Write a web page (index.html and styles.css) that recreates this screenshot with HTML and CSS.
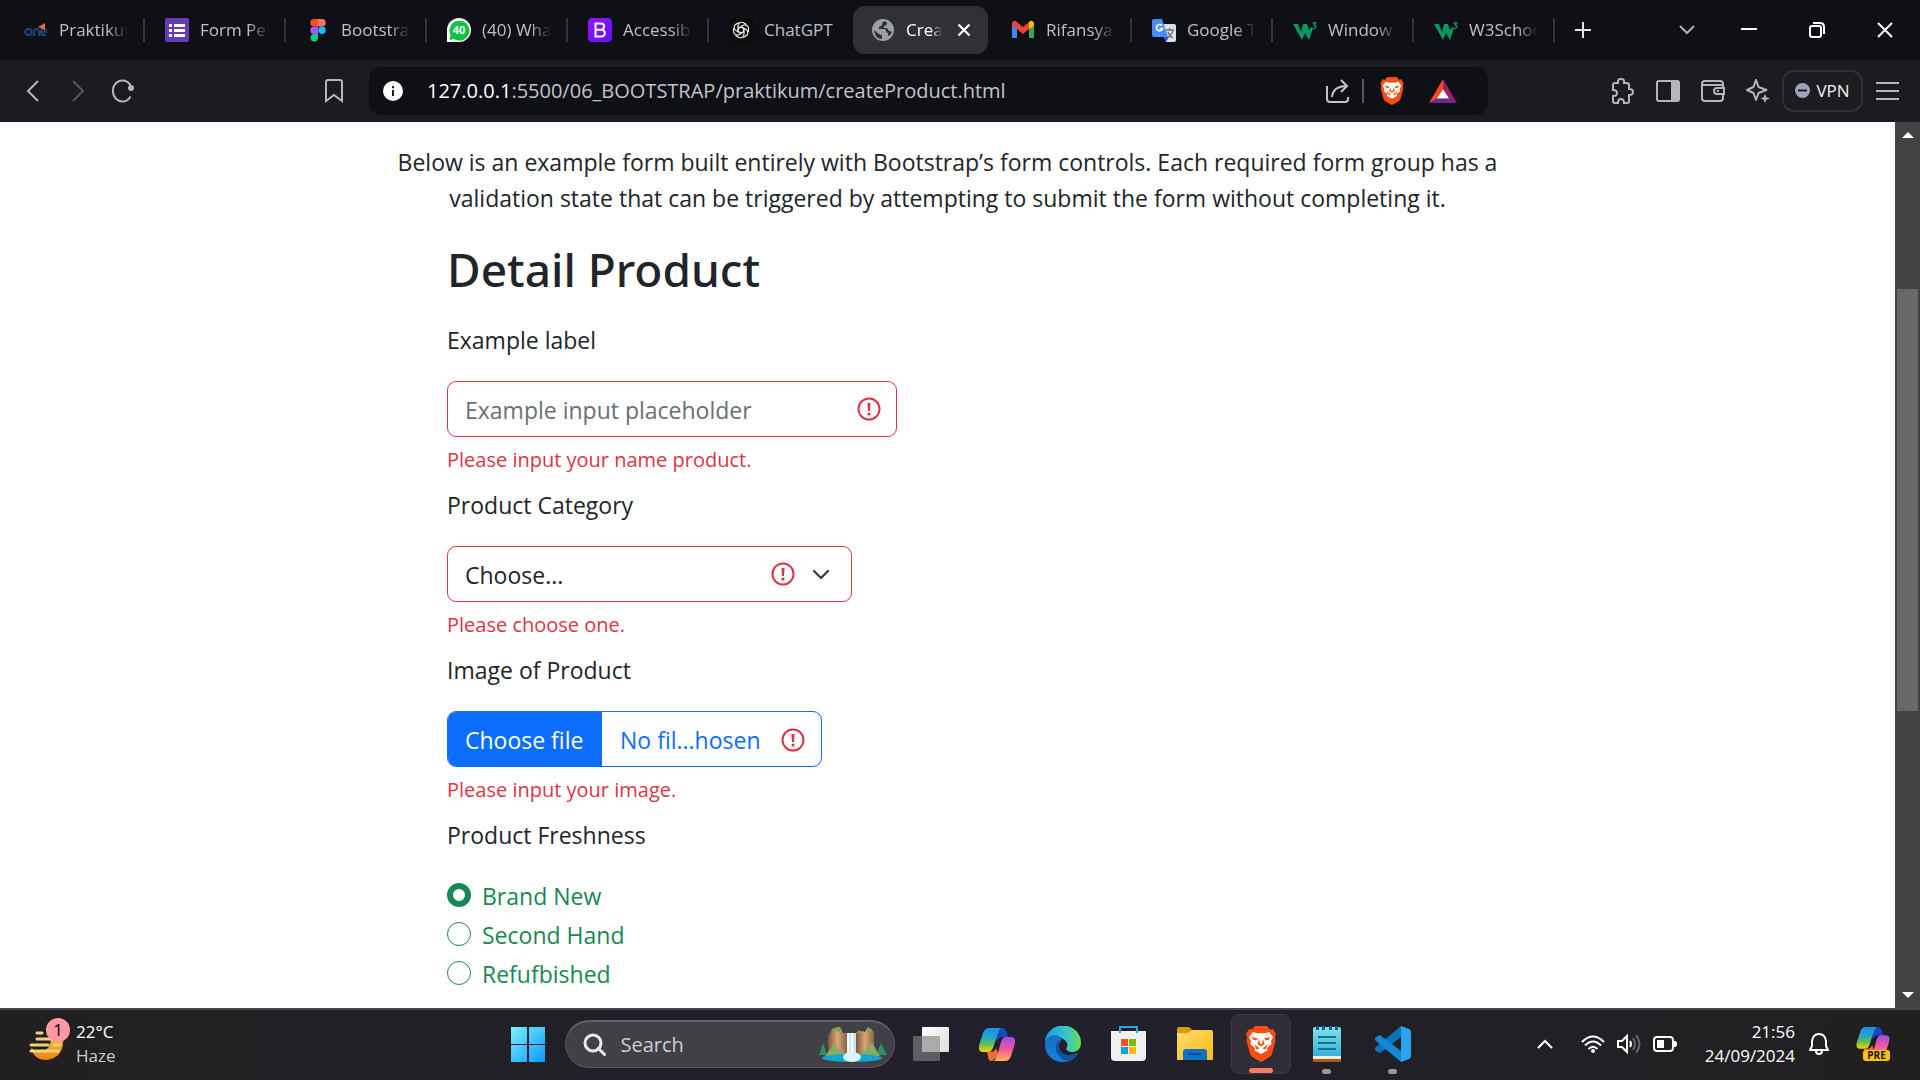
FILE: index.html
```html
<!DOCTYPE html>
<html lang="en">
<head>
<meta charset="utf-8">
<title>Create Product</title>
<link rel="stylesheet" href="styles.css">
</head>
<body>
<svg class="defs" aria-hidden="true">
  <defs>
    <linearGradient id="win" gradientUnits="userSpaceOnUse" x1="0" y1="0" x2="36" y2="36"><stop offset="0" stop-color="#7df3ff"/><stop offset="1" stop-color="#0a96ff"/></linearGradient>
    <linearGradient id="cpA" x1="0" y1="0" x2="0" y2="1"><stop offset="0" stop-color="#1f8fe8"/><stop offset=".4" stop-color="#23a7c9"/><stop offset=".7" stop-color="#6cc04a"/><stop offset="1" stop-color="#ffd400"/></linearGradient>
    <linearGradient id="cpB" x1="0" y1="0" x2="0" y2="1"><stop offset="0" stop-color="#a14bf0"/><stop offset=".5" stop-color="#f2559b"/><stop offset="1" stop-color="#ffb657"/></linearGradient>
    <linearGradient id="edA" x1="0" y1="0" x2="1" y2="0"><stop offset="0" stop-color="#1b9de2"/><stop offset=".6" stop-color="#35c6c9"/><stop offset="1" stop-color="#66e04b"/></linearGradient>
    <linearGradient id="edB" x1="0" y1="0" x2="0" y2="1"><stop offset="0" stop-color="#1a6fc0"/><stop offset="1" stop-color="#0f83dc"/></linearGradient>
    <linearGradient id="fold" x1="0" y1="0" x2="1" y2="1"><stop offset="0" stop-color="#ffdc70"/><stop offset="1" stop-color="#fcb912"/></linearGradient>
    <linearGradient id="note" x1="0" y1="0" x2="0" y2="1"><stop offset="0" stop-color="#7fe0ee"/><stop offset="1" stop-color="#37b3d3"/></linearGradient>
    <linearGradient id="moon" x1="0" y1="0" x2="0" y2="1"><stop offset="0" stop-color="#f7c331"/><stop offset="1" stop-color="#f07f16"/></linearGradient>
    <linearGradient id="rock" x1="0" y1="0" x2="1" y2="0"><stop offset="0" stop-color="#7d5640"/><stop offset=".5" stop-color="#d9a878"/><stop offset="1" stop-color="#8d6244"/></linearGradient>
    <linearGradient id="bs" x1="0" y1="0" x2="1" y2="1"><stop offset="0" stop-color="#9013fe"/><stop offset="1" stop-color="#6610f2"/></linearGradient>
    <symbol id="error" viewBox="0 0 24 24"><circle cx="12" cy="12" r="10.500" fill="none" stroke="#dc3545" stroke-width="2"/><path d="M10.400 6h3.200l-.6 8h-2z" fill="#dc3545"/><circle cx="12" cy="17" r="1.600" fill="#dc3545"/></symbol>
    <symbol id="w3" viewBox="0 0 24 24"><path d="M0 6h5l3 8 2-8h4l2 6 2-3 2 1-4 12-4-7-3 7z" fill="#059862"/><path d="M19.500 5h3.200l-1.500 2q1.800.2 1.700 2-.2 1.700-3.200 1.500" fill="none" stroke="#059862" stroke-width="1.300"/></symbol>
    <symbol id="lion" viewBox="0 0 30 36"><path d="M9 0h12l3 3.500 3-.5 3 5-1 3 .5 4-4 14.500L22 32l-7 4-7-4-3.500-2.500L.5 15 1 11 0 8l3-5 3 .5z" fill="#fb4d12"/><path d="M7 6l5 1.500 3-.5 3 .5L23 6l4 5-2 4 .5 3-4.500 4 .5 2.500L15 28l-6.500-3.500L9 22l-4.500-4L5 15l-2-4z" fill="#fff"/><path d="M6 11l6 1.500-2 2-3-1zM24 11l-6 1.500 2 2 3-1zM13 13l-1.500 5 3.500 2.500 3.500-2.500L17 13l-.8 4.500L15 18.500l-1.200-1zM8 18l5.500 4.500-3 1zM22 18l-5.500 4.500 3 1z" fill="#fb4d12"/></symbol>
    <symbol id="copilot" viewBox="0 0 36 33"><path d="M23 0c3 0 4 2 5 5l1 4h-6c-3 0-4 2-5 5l-2-9z" fill="#1747c4"/><path d="M10 0h14c-3 0-4 2-5 5l-5 15c-1 2-2 4-5 4H4c-4 0-5-3-3.500-8L4 5c1-3 3-5 6-5z" fill="url(#cpA)"/><path d="M13 33c-3 0-4-2-4-5l-1-4h4c3 0 4-2 5-4l3 8z" fill="#f5683a"/><path d="M26 33H13c3 0 4-2 5-5l4-14c1-3 2-5 5-5h5c4 0 5 3 3.500 8L32 28c-1 3-3 5-6 5z" fill="url(#cpB)"/></symbol>
  </defs>
</svg>

<header class="tabstrip">
  <nav class="tabs" aria-label="Tabs">
    <a class="tab" href="#"><svg class="fav" viewBox="0 0 24 24"><g fill="none" stroke="#1d3f7a" stroke-width="2.200"><circle cx="4.500" cy="14" r="3.200"/><path d="M10 18v-4q0-3 2.500-3t2.500 3v4M17 14h5q0-3-2.500-3T17 14q0 4 5 3"/></g><path d="M14 9l7-4v7z" fill="#f0643c"/></svg><span class="tab-title">Praktikum</span></a>
    <a class="tab" href="#"><svg class="fav" viewBox="0 0 24 24"><rect width="24" height="24" rx="2" fill="#673ab7"/><path d="M4 6h3v3H4zM9 6h11v3H9zM4 11h3v3H4zM9 11h11v3H9zM4 16h3v3H4zM9 16h11v3H9z" fill="#fff"/></svg><span class="tab-title">Form Pen</span></a>
    <a class="tab" href="#"><svg class="fav" viewBox="0 0 24 24"><path d="M12 1v7.500H8a3.750 3.750 0 010-7.500z" fill="#f24e1e"/><path d="M12 1h4a3.750 3.750 0 010 7.500h-4z" fill="#ff7262"/><path d="M12 8.500V16H8a3.750 3.750 0 010-7.500z" fill="#a259ff"/><circle cx="16" cy="12.250" r="3.750" fill="#1abcfe"/><path d="M12 16v3.500A3.750 3.750 0 118 16z" fill="#0acf83"/></svg><span class="tab-title">Bootstrap</span></a>
    <a class="tab" href="#"><svg class="fav" viewBox="0 0 24 24"><path d="M0 24V12A12 12 0 1112 24z" fill="#fff"/><path d="M2.500 22l1-5A10 10 0 117 21z" fill="#12c143"/><text x="12" y="16" class="badge-40">40</text></svg><span class="tab-title">(40) What</span></a>
    <a class="tab" href="#"><svg class="fav" viewBox="0 0 24 24"><rect width="24" height="24" rx="4" fill="url(#bs)"/><path d="M7.500 5.500h5.500a3 3 0 010 6.200H7.500zM7.500 11.700h6a3.400 3.400 0 010 6.800h-6z" fill="none" stroke="#fff" stroke-width="2"/></svg><span class="tab-title">Accessibility</span></a>
    <a class="tab tab-last" href="#"><svg class="fav" viewBox="0 0 24 24"><rect width="24" height="24" rx="4" fill="#0c0c0c"/><g fill="none" stroke="#e8e8e8" stroke-width="1.200"><path id="petal" d="M12 9l3 1.700v5.500a3.700 3.700 0 01-5.600 3L6.500 17.400"/><use href="#petal" transform="rotate(60 12 12)"/><use href="#petal" transform="rotate(120 12 12)"/><use href="#petal" transform="rotate(180 12 12)"/><use href="#petal" transform="rotate(240 12 12)"/><use href="#petal" transform="rotate(300 12 12)"/></g></svg><span class="tab-title">ChatGPT</span></a>
    <a class="tab tab-active" href="#"><svg class="fav" viewBox="0 0 24 24"><circle cx="12" cy="12" r="11" fill="#9aa0a6"/><path d="M14 3q-3 1-3 3t-2 2.500T8 11h5q2 0 2 2t2 2v3q3-1 4-4-1-1-3-1-1-3-3-3h-2V8q3 0 3-3zM3 12l5 4q1 1 3 1v4q-7 0-8-9z" fill="#313035"/></svg><span class="tab-title">Create</span><svg class="tab-close" viewBox="0 0 14 14"><path d="M1.500 1.500l11 11M12.500 1.500l-11 11" stroke="#fff" stroke-width="2.200"/></svg></a>
    <a class="tab" href="#"><svg class="fav" viewBox="0 0 24 24"><path d="M1 4v16h5V10z" fill="#4285f4"/><path d="M23 4v16h-5V10z" fill="#34a853"/><path d="M1 5q2-4 5-1l6 5 6-5v7l-6 5-6-5-5-4z" fill="#ea4335"/><path d="M18 4q3-3 5 1v3l-5 3z" fill="#fbbc04"/></svg><span class="tab-title">Rifansyah</span></a>
    <a class="tab" href="#"><svg class="fav" viewBox="0 0 24 24"><path d="M10 6h12q2 0 2 2v14q0 2-2 2h-8z" fill="#dcdfe3"/><path d="M14 12h8M18 10v2M21 12q-1 5-6 8M16 14q1 4 5 6" fill="none" stroke="#6b7a80" stroke-width="1.300"/><path d="M11 19l3 5 3-5z" fill="#3a50c8"/><path d="M2 1h8l6 18H2q-2 0-2-2V3q0-2 2-2z" fill="#4a8cf7"/><path d="M10 7.500a3.200 3.200 0 10.700 3H7.500" fill="none" stroke="#fff" stroke-width="1.600"/></svg><span class="tab-title">Google Tr</span></a>
    <a class="tab" href="#"><svg class="fav"><use href="#w3"/></svg><span class="tab-title">Window</span></a>
    <a class="tab" href="#"><svg class="fav"><use href="#w3"/></svg><span class="tab-title">W3Schools</span></a>
  </nav>
  <button class="new-tab" aria-label="New tab"><svg width="16" height="16"><path d="M8 0v16M0 8h16" stroke="#e6e6e8" stroke-width="2"/></svg></button>
  <div class="window-controls">
    <button aria-label="Search tabs"><svg width="16" height="10"><path d="M1 1l7 7 7-7" fill="none" stroke="#b0b0b4" stroke-width="2"/></svg></button>
    <button aria-label="Minimize"><svg width="16" height="16"><path d="M0 7h16" stroke="#fff" stroke-width="2"/></svg></button>
    <button aria-label="Restore"><svg width="16" height="16" fill="none" stroke="#fff" stroke-width="2"><rect x="1" y="4" width="11" height="11" rx="2"/><path d="M4 1h7q4 0 4 4v7"/></svg></button>
    <button aria-label="Close"><svg width="16" height="16"><path d="M1 1l14 14M15 1L1 15" stroke="#fff" stroke-width="2"/></svg></button>
  </div>
</header>

<div class="toolbar">
  <div class="nav-buttons">
    <button aria-label="Back"><svg width="14" height="22"><path d="M12 1L2 11l10 10" fill="none" stroke="#b6b6ba" stroke-width="2"/></svg></button>
    <button aria-label="Forward"><svg width="14" height="22"><path d="M2 1l10 10L2 21" fill="none" stroke="#56565c" stroke-width="2"/></svg></button>
    <button aria-label="Reload"><svg width="24" height="24"><path d="M19.500 17.500A9.500 10.500 0 1120 7.500" fill="none" stroke="#b6b6ba" stroke-width="2"/><circle cx="20" cy="9" r="3" fill="#b6b6ba"/></svg></button>
  </div>
  <button class="bookmark" aria-label="Bookmark"><svg width="18" height="24"><path d="M1 3q0-2 2-2h12q2 0 2 2v19l-8-6-8 6z" fill="none" stroke="#b6b6ba" stroke-width="2"/></svg></button>
  <div class="address">
    <svg width="20" height="20"><circle cx="10" cy="10" r="10" fill="#fff"/><path d="M10 9v6M10 5v2.200" stroke="#1c1b20" stroke-width="2"/></svg>
    <p class="url"><span class="url-host">127.0.0.1</span>:5500/06_BOOTSTRAP/praktikum/createProduct.html</p>
    <svg width="24" height="24" fill="none" stroke="#c4c4c8" stroke-width="2"><path d="M1 7v13q0 3 3 3h15q3 0 3-3v-2M6 18q1-11 15-11M15 1l6 6-6 6"/></svg>
    <span class="address-sep"></span>
    <svg width="24" height="28"><use href="#lion"/></svg>
    <svg class="rewards" width="28" height="24"><path d="M14 0v10L8 20l-8 4z" fill="#ff4724"/><path d="M14 0l14 24-8-4-6-10z" fill="#9e1f63"/><path d="M0 24l8-4.500h12l8 4.500z" fill="#662d91"/><path d="M14 10l6 9.500H8z" fill="#fff"/></svg>
  </div>
  <div class="tools">
    <button aria-label="Extensions"><svg width="24" height="28" fill="none" stroke="#b6b6ba" stroke-width="2"><path d="M2 8q0-2 2-2h3q-1-4 3-4t3 4h3q2 0 2 2v4q4 0 4 3t-4 3v6q0 2-2 2h-3q0-4-3-4t-3 4H4q-2 0-2-2v-5q4 0 4-3t-4-3z"/></svg></button>
    <button aria-label="Side panel"><svg width="24" height="22"><rect x="1" y="1" width="22" height="20" rx="2" fill="none" stroke="#b6b6ba" stroke-width="2"/><path d="M15 1h8v20h-8z" fill="#b6b6ba"/></svg></button>
    <button aria-label="Wallet"><svg width="24" height="22" fill="none" stroke="#b6b6ba" stroke-width="2"><path d="M22 8V4q0-3-3-3H4Q1 1 1 4v14q0 3 3 3h15q3 0 3-3M1 5h21M22 8h-6q-3 0-3 3t3 3h7V8zM22 14v4M16 11h2"/></svg></button>
    <button aria-label="Leo AI"><svg width="24" height="24"><path d="M10 1l2.500 7 8 3-8 3L10 21l-2.500-7-6.500-3 6.500-3z" fill="none" stroke="#b6b6ba" stroke-width="2" stroke-linejoin="round"/><path d="M19 15l1.300 3.200L24 19.500l-3.700 1.300L19 24l-1.300-3.200-3.200-1.300 3.200-1.300z" fill="#b6b6ba"/></svg></button>
  </div>
  <button class="vpn"><svg width="15" height="15"><circle cx="7.500" cy="7.500" r="7.500" fill="#a0a2b8"/><path d="M3 7.500h9" stroke="#1c1b20" stroke-width="2"/></svg>VPN</button>
  <button class="menu" aria-label="Menu"><svg width="23" height="18"><path d="M0 1h23M0 9h23M0 17h23" stroke="#b6b6ba" stroke-width="2"/></svg></button>
</div>

<div class="viewport">
  <main class="page">
    <p class="lead">Below is an example form built entirely with Bootstrap’s form controls. Each required form group has a validation state that can be triggered by attempting to submit the form without completing it.</p>
    <form class="product-form">
      <h1>Detail Product</h1>
      <div class="group">
        <label for="name">Example label</label>
        <div class="field field-name">
          <input class="control" id="name" type="text" placeholder="Example input placeholder">
          <svg class="error-icon"><use href="#error"/></svg>
        </div>
        <p class="invalid">Please input your name product.</p>
      </div>
      <div class="group">
        <label for="category">Product Category</label>
        <div class="field field-category">
          <select class="control" id="category"><option>Choose...</option></select>
          <svg class="error-icon"><use href="#error"/></svg>
          <svg class="caret" viewBox="0 0 18 18"><path d="M2 5l7 7 7-7" fill="none" stroke="#343a40" stroke-width="2.200" stroke-linecap="round" stroke-linejoin="round"/></svg>
        </div>
        <p class="invalid">Please choose one.</p>
      </div>
      <div class="group">
        <label for="image">Image of Product</label>
        <div class="field field-image">
          <span class="file-button">Choose file</span>
          <span class="file-name">No fil...hosen</span>
          <input class="file-input" id="image" type="file">
          <svg class="error-icon"><use href="#error"/></svg>
        </div>
        <p class="invalid">Please input your image.</p>
      </div>
      <fieldset class="choices">
        <legend>Product Freshness</legend>
        <label class="choice"><input type="radio" name="fresh" checked>Brand New</label>
        <label class="choice"><input type="radio" name="fresh">Second Hand</label>
        <label class="choice"><input type="radio" name="fresh">Refufbished</label>
      </fieldset>
    </form>
  </main>
  <div class="scrollbar">
    <svg width="12" height="6"><path d="M0 6l6-6 6 6z" fill="#fff"/></svg>
    <div class="track"><div class="thumb"></div></div>
    <svg width="12" height="6"><path d="M0 0l6 6 6-6z" fill="#fff"/></svg>
  </div>
</div>

<footer class="taskbar">
  <div class="weather">
    <div class="weather-icon"><svg width="36" height="36"><path d="M34 10q2 22-17 24Q5 34 2 22q6 5 12 3 8-2 8-14z" fill="url(#moon)"/><path d="M8 7h5M8 13h24M2 19h17M25 19h5M2 25h27" stroke="#f3d27c" stroke-width="3" stroke-linecap="round"/></svg><span class="count">1</span></div>
    <p class="weather-text"><span>22°C</span><span class="dim">Haze</span></p>
  </div>
  <div class="apps">
    <button class="app" aria-label="Start"><svg width="36" height="36" viewBox="0 0 36 36"><path d="M1 1h16v17H1zM19 1h16v17H19zM1 19h16v17H1zM19 19h16v17H19z" fill="url(#win)"/></svg></button>
    <label class="search">
      <svg width="23" height="24" fill="none" stroke="#e9e9ec" stroke-width="3"><circle cx="10" cy="10" r="8"/><path d="M15.500 15.500l6 6" stroke-linecap="round"/></svg>
      <input type="text" placeholder="Search" aria-label="Search">
      <svg width="70" height="36"><path d="M1 28l4-12 4 12zM58 28l5-12 6 12z" fill="#2f8f6b"/><path d="M28 6h12l2 22H26z" fill="#c9e6f9"/><path d="M30 6v20M34 6v20" stroke="#fff" stroke-width="2"/><path d="M10 28V9l4-7 8-2 3 6h4v22z" fill="url(#rock)"/><path d="M38 27V6l6-2 3 1 3-5 6 5v23z" fill="url(#rock)"/><path d="M14 2l5-2 5 2-3 3-5-1zM38 6l3-3 3 3zM48 2l4-1 3 3-4 1z" fill="#7aa845"/><path d="M7 29q4-5 9-12 5 8 11 9v4zM41 27q8-3 13-12 4 8 8 14H43z" fill="#89ad5c"/><ellipse cx="34" cy="31" rx="30" ry="4" fill="#12a8d3"/><ellipse cx="34" cy="30" rx="9" ry="5" fill="#d9f4fc"/></svg>
    </label>
    <button class="app" aria-label="Task view"><svg width="36" height="34"><defs><linearGradient id="tv" x1="0" y1="0" x2="1" y2="1"><stop offset="0" stop-color="#fff"/><stop offset="1" stop-color="#dcdcdc"/></linearGradient></defs><rect x="9" width="27" height="25" rx="1" fill="url(#tv)"/><rect y="9" width="27" height="25" rx="1" fill="#5e5e60"/><path d="M9 9h18v16H9z" fill="#aaa"/></svg></button>
    <button class="app" aria-label="Copilot"><svg width="36" height="33"><use href="#copilot"/></svg></button>
    <button class="app" aria-label="Edge"><svg width="36" height="36"><path d="M0 16A18 17 0 0136 17c0 7-5 9-9 9s-7-2-5-5c2-5-4-10-11-10-5 0-9 2-11 5z" fill="url(#edA)"/><path d="M0 19C0 10 9 7 14 10c5 3 0 5 0 10 0 8 9 11 16 8 2-1 4-1 3 0a18 18 0 01-15 8C8 36 0 29 0 19z" fill="url(#edB)"/><path d="M14 14c-4 4-4 10-1 14s6 7 10 7c5-2 8-4 10-8-6 4-19 3-19-7z" fill="#144f9e"/></svg></button>
    <button class="app" aria-label="Microsoft Store"><svg width="36" height="36"><path d="M0 5h35v26q0 4-4 4H4q-4 0-4-4z" fill="#f0f0f1"/><path d="M9 7V1h17v6" fill="none" stroke="#27a7e6" stroke-width="2"/><path d="M10 13h7v7h-7z" fill="#f25022"/><path d="M18 13h7v7h-7z" fill="#7fba00"/><path d="M10 21h7v7h-7z" fill="#00a4ef"/><path d="M18 21h7v7h-7z" fill="#ffb900"/></svg></button>
    <button class="app" aria-label="File Explorer"><svg width="36" height="34"><path d="M0 2q0-2 2-2h9q2 0 4 3v8H0z" fill="#dc9a06"/><path d="M0 6h11l4-3h19q2 0 2 2v28H0z" fill="url(#fold)"/><path d="M6 33v-8q0-3 3-3h18q3 0 3 3v8z" fill="#0f71c6"/><path d="M11 27h14" stroke="#0a4c92" stroke-width="2"/></svg></button>
    <button class="app app-current" aria-label="Brave"><svg width="30" height="36"><use href="#lion"/></svg></button>
    <button class="app app-open" aria-label="Notepad"><svg width="28" height="36"><path d="M0 28h28v8H0z" fill="#b3560f"/><path d="M0 29h28v4H0z" fill="#f0eeec"/><path d="M0 3q0-2 2-2h24q2 0 2 2v27H0z" fill="url(#note)"/><path d="M4.500 0v4M10.500 0v4M17.500 0v4M23.500 0v4" stroke="#0d6180" stroke-width="3"/><path d="M5 11h18M5 17h18M5 23h18" stroke="#0f7396" stroke-width="2"/></svg></button>
    <button class="app app-open" aria-label="Visual Studio Code"><svg width="36" height="36"><path d="M26 0v11L5 27l-4-2q-2-2 0-4z" fill="#0d74b8"/><path d="M26 36V25L5 9l-4 2q-2 2 0 4z" fill="#1289d6"/><path d="M26 0l8 3q2 1 2 3v24q0 2-2 3l-8 3z" fill="#2ba5f2"/></svg></button>
  </div>
  <div class="tray">
    <button aria-label="Hidden icons"><svg width="16" height="10"><path d="M1 9l7-7 7 7" fill="none" stroke="#fff" stroke-width="2"/></svg></button>
    <button class="status" aria-label="Network, sound, battery">
      <svg width="24" height="18" fill="none" stroke="#fff" stroke-width="2"><path d="M1 7q11-11 22 0M4 10.500q8-8 16 0M7.500 14q4.500-4.500 9 0"/><circle cx="12" cy="16" r="1"/></svg>
      <svg width="24" height="20" fill="none" stroke-width="2"><path d="M1 7h4l5-5v16l-5-5H1z" stroke="#fff"/><path d="M13 7q2 3 0 6" stroke="#fff"/><path d="M16 4q4 6 0 12M19 1q7 9 0 18" stroke="#66666b"/></svg>
      <svg width="24" height="16"><rect x="1" y="1" width="19" height="14" rx="3" fill="none" stroke="#fff" stroke-width="2"/><path d="M4 4h7v8H4zM21 5h1q2 0 2 3t-2 3h-1z" fill="#fff"/></svg>
    </button>
    <button class="clock"><time>21:56</time><time>24/09/2024</time></button>
    <button aria-label="Notifications"><svg width="20" height="22" fill="none" stroke="#fff" stroke-width="2"><path d="M1 17l2-4V8q1-7 7-7t7 7v5l2 4zM7 18q0 3 3 3t3-3"/></svg></button>
    <button class="copilot-pre" aria-label="Copilot preview"><svg width="34" height="30"><use href="#copilot"/></svg><span class="pre">PRE</span></button>
  </div>
</footer>
</body>
</html>
```
FILE: styles.css
```css
* { box-sizing: border-box; }

body {
  margin: 0;
  height: 100vh;
  display: flex;
  flex-direction: column;
  overflow: hidden;
  font-family: "Open Sans", "Noto Sans", sans-serif;
  background: #fff;
}

p, h1, fieldset { margin: 0; }

button {
  border: 0;
  padding: 0;
  background: none;
  color: inherit;
  font: inherit;
  display: flex;
  align-items: center;
  justify-content: center;
}

svg { flex: none; display: block; }
.defs { position: absolute; width: 0; height: 0; }

/* Tab strip */
.tabstrip {
  flex: none;
  display: flex;
  align-items: center;
  height: 60px;
  padding: 0 1px 0 4px;
  background: #0f1015;
  color: #c0c0c4;
  font-size: 17px;
}
.tabs { display: flex; align-items: center; }
.tab {
  display: flex;
  align-items: center;
  gap: 11px;
  width: 141px;
  height: 24px;
  padding: 0 15px 0 20px;
  border-right: 2px solid #333338;
  color: inherit;
  text-decoration: none;
}
.fav { width: 24px; height: 24px; }
.badge-40 { font: 700 11px "Noto Sans", sans-serif; fill: #fff; text-anchor: middle; }
.tab-title {
  flex: 1;
  overflow: hidden;
  padding-bottom: 2px;
  white-space: nowrap;
  -webkit-mask-image: linear-gradient(90deg, #000 70%, transparent);
  mask-image: linear-gradient(90deg, #000 70%, transparent);
}
.tab-last { border-color: transparent; }
.tab-last .tab-title { -webkit-mask-image: none; mask-image: none; overflow: visible; }
.tab-active {
  width: 135px;
  height: 48px;
  margin: 0 3px;
  padding: 0 17px 0 18px;
  border: 0;
  border-radius: 12px;
  background: #313035;
  color: #fff;
}
.tab-close { width: 14px; height: 14px; margin-left: 4px; }
.new-tab { width: 56px; height: 48px; }
.window-controls { display: flex; margin-left: auto; }
.window-controls button { width: 68px; height: 60px; }
.window-controls button:first-child { width: 56px; }

/* Toolbar */
.toolbar {
  flex: none;
  display: flex;
  align-items: center;
  height: 62px;
  padding: 0 21px 1px 10px;
  background: #1c1b20;
}
.nav-buttons { display: flex; }
.nav-buttons button { width: 45px; height: 48px; }
.bookmark { width: 48px; height: 48px; margin-left: 165px; }
.address {
  flex: 1;
  display: flex;
  align-items: center;
  height: 48px;
  margin-left: 11px;
  padding: 0 31px 0 14px;
  border-radius: 12px;
  background: #0f1015;
}
.url {
  flex: 1;
  margin-left: 24px;
  color: #c4c4c8;
  font-size: 20px;
  white-space: nowrap;
}
.url-host { color: #fff; }
.address-sep { width: 2px; height: 24px; margin: 0 16px 0 12px; background: #56565c; }
.rewards { margin-left: 25px; }
.tools { display: flex; margin-left: 112px; }
.tools button { width: 45px; height: 48px; }
.vpn {
  gap: 6px;
  width: 81px;
  height: 42px;
  margin-left: 2px;
  border: 2px solid #302f35;
  border-radius: 12px;
  color: #f2f2f4;
  font-size: 17px;
}
.menu { margin-left: 13px; }

/* Web page */
.viewport { flex: 1; min-height: 0; display: flex; }
.page {
  flex: 1;
  overflow: hidden;
  padding-top: 22px;
  color: #212529;
  font-size: 23px;
  line-height: 36px;
}
.lead { max-width: 1120px; margin: 0 auto; text-align: center; }
.product-form { max-width: 1001px; margin: 0 auto; }
h1 {
  margin: 24px 0;
  font-family: "Noto Sans", "Open Sans", sans-serif;
  font-size: 46px;
  font-weight: 500;
  line-height: 58px;
}
.group { margin-bottom: 11px; }
.group > label, legend { display: block; margin-bottom: 23px; padding: 0; }
.field { position: relative; height: 56px; }
.field-name { width: 450px; }
.field-category { width: 405px; }
.field-image {
  display: flex;
  width: 375px;
  overflow: hidden;
  border: 1px solid #0d6efd;
  border-radius: 9px;
  color: #0d6efd;
  line-height: 56px;
}
.control {
  display: block;
  width: 100%;
  height: 100%;
  padding: 9px 54px 8px 17px;
  border: 1px solid #dc3545;
  border-radius: 9px;
  background: #fff;
  color: #212529;
  font: inherit;
  appearance: none;
}
.control::placeholder { color: #6a6f74; opacity: 1; }
.file-button { width: 154px; padding-left: 17px; background: #0d6efd; color: #fff; }
.file-name { padding-left: 18px; }
.file-input { position: absolute; inset: 0; opacity: 0; }
.error-icon {
  position: absolute;
  top: 16px;
  right: 16px;
  width: 24px;
  height: 24px;
}
.field-category .error-icon { right: 57px; }
.caret { position: absolute; top: 20px; right: 22px; width: 18px; height: 18px; }
.invalid { margin-top: 7px; color: #dc3545; font-size: 20px; line-height: 32px; }
.choices { padding: 0; border: 0; }
.choices legend { margin-bottom: 25px; }
.choice { display: flex; gap: 11px; height: 36px; margin-bottom: 3px; color: #198754; }
.choice input {
  appearance: none;
  width: 24px;
  height: 24px;
  margin: 5px 0 0;
  border: 1px solid #198754;
  border-radius: 50%;
  background: #fff;
}
.choice input:checked { border-width: 6px; }

.scrollbar {
  display: flex;
  flex-direction: column;
  align-items: center;
  width: 25px;
  padding: 10px 0;
  background: #424242;
}
.track { flex: 1; align-self: stretch; padding: 151px 2px 0; }
.thumb { height: 60%; background: #686868; }

/* Taskbar */
.taskbar {
  flex: none;
  display: grid;
  grid-template-columns: 1fr auto 1fr;
  align-items: center;
  height: 72px;
  padding-bottom: 2px;
  border-top: 2px solid #47474b;
  background: linear-gradient(90deg, #202020, #22202a 40%, #22202a 60%, #202020);
  color: #fff;
  font-size: 17px;
  line-height: 24px;
}
.weather { display: flex; align-items: center; gap: 11px; padding-left: 29px; }
.weather-icon { position: relative; }
.count {
  position: absolute;
  top: -8px;
  right: -5px;
  width: 24px;
  height: 24px;
  border-radius: 50%;
  background: #ff99a4;
  color: #000;
  text-align: center;
}
.weather-text { display: flex; flex-direction: column; }
.dim { color: #c8c8ca; }
.apps { display: flex; align-items: center; }
.app { position: relative; width: 60px; height: 60px; margin: 0 3px; border-radius: 8px; }
.app-current { border: 1px solid #3b3a42; background: #2f2e37; }
.app-current::after, .app-open::after {
  content: "";
  position: absolute;
  bottom: 0;
  width: 24px;
  height: 5px;
  border-radius: 3px;
  background: #f67c62;
}
.app-open::after { width: 9px; background: #9b9a9f; }
.search {
  display: flex;
  align-items: center;
  width: 330px;
  height: 48px;
  margin: 0 3px 0 4px;
  padding: 0 6px 0 17px;
  border: 1px solid #55545a;
  border-top: 2px solid #626167;
  border-radius: 24px;
  background: #414046;
}
.search input {
  flex: 1;
  min-width: 0;
  margin-left: 15px;
  padding: 0;
  border: 0;
  background: none;
  color: #fff;
  font: 20px "Open Sans", "Noto Sans", sans-serif;
}
.search input::placeholder { color: #cfcfd2; opacity: 1; }
.tray { display: flex; align-items: center; justify-content: flex-end; padding-right: 30px; }
.status { gap: 12px; margin-left: 28px; }
.clock { flex-direction: column; align-items: flex-end; min-width: 93px; margin: 0 14px 0 25px; }
.copilot-pre { position: relative; margin-left: 27px; height: 34px; align-items: flex-start; }
.pre {
  position: absolute;
  right: 0;
  bottom: 0;
  width: 27px;
  border-radius: 3px;
  background: #ffc400;
  color: #111;
  font-size: 10px;
  font-weight: 700;
  line-height: 11px;
}
```
